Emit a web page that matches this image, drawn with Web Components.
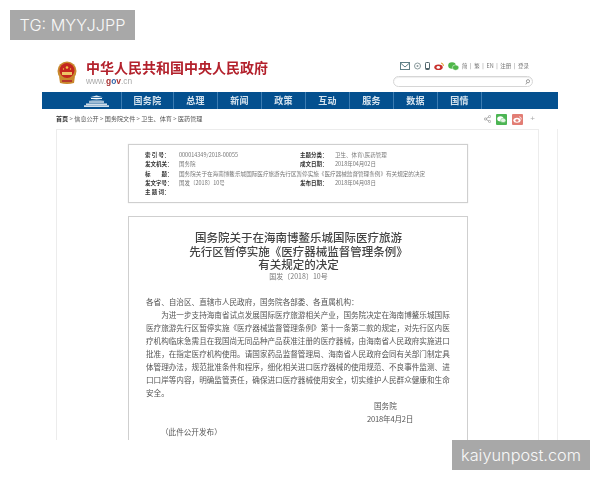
<!DOCTYPE html>
<html lang="zh">
<head>
<meta charset="utf-8">
<title>国务院关于在海南博鳌乐城国际医疗旅游先行区暂停实施《医疗器械监督管理条例》有关规定的决定</title>
<style>
    html, body { margin: 0; background: #fff; }
    body { width: 600px; height: 480px; overflow: hidden; position: relative; font-family: "Liberation Sans", "Noto Sans CJK SC", sans-serif; }
</style>
</head>
<body>
<gov-page>
    <gov-header></gov-header>
    <gov-nav></gov-nav>
    <crumb-bar></crumb-bar>
    <doc-card>
        <doc-meta></doc-meta>
        <doc-body></doc-body>
    </doc-card>
</gov-page>
<water-mark class="top" style="left:10px;top:10px;width:125px">TG: MYYJJPP</water-mark>
<water-mark style="left:452px;top:440px;width:138px">kaiyunpost.com</water-mark>

<script>
class GovPage extends HTMLElement {
    constructor() {
        super();
        this.attachShadow({ mode: 'open' });
        this.shadowRoot.innerHTML = `
            <style>
                :host { display: block; margin: 40px 0 0 42px; width: 516px; height: 400px; overflow: hidden; }
            </style>
            <slot></slot>
        `;
    }
}

class GovHeader extends HTMLElement {
    constructor() {
        super();
        this.attachShadow({ mode: 'open' });
        this.shadowRoot.innerHTML = `
            <style>
                :host { display: flex; justify-content: space-between; box-sizing: border-box; height: 52px; padding: 21px 25px 0 15px; filter: blur(.4px); }
                .brand { display: flex; gap: 9px; }
                .names { display: flex; flex-direction: column; }
                h1 { margin: 0; font: 700 14px/15px "Liberation Sans", "Noto Sans CJK SC", sans-serif; color: #b3212c; white-space: nowrap; }
                .url { margin-top: 1px; font: 8.4px/9px "Liberation Sans", sans-serif; color: #aaa; }
                .url b { color: #a33; font-weight: 700; }
                .url b i { font-style: normal; color: #36a; }
                .tools { width: 140px; display: flex; flex-direction: column; gap: 5px; }
                .icons { display: flex; align-items: center; height: 10px; padding-left: 7px; gap: 4px; }
                .langs { margin-left: -1px; display: flex; gap: 2.6px; font: 5.5px/10px "Noto Sans CJK SC", sans-serif; color: #777; white-space: nowrap; }
                .search { height: 9px; border: 1px solid #d6d6d6; border-radius: 6px; display: flex; justify-content: flex-end; align-items: center; padding-right: 2px; box-shadow: inset 0 1px 1px #eee; }
                svg { display: block; flex: none; }
            </style>
            <div class="brand">
                <svg width="20" height="24" viewBox="0 0 20 24">
                    <circle cx="10" cy="10" r="9.5" fill="#c98a2e"/>
                    <circle cx="10" cy="9.5" r="7.5" fill="#c4261f"/>
                    <circle cx="10" cy="6.5" r="1.3" fill="#f2c84b"/>
                    <circle cx="6.5" cy="8" r=".7" fill="#f2c84b"/>
                    <circle cx="13.5" cy="8" r=".7" fill="#f2c84b"/>
                    <rect x="5" y="11" width="10" height="3" fill="#eec466"/>
                    <path d="M2 15 Q10 21 18 15 L17 22 Q10 24 3 22Z" fill="#c9872c"/>
                    <rect x="5" y="19" width="10" height="2" fill="#b5382a"/>
                </svg>
                <div class="names">
                    <h1>中华人民共和国中央人民政府</h1>
                    <div class="url">www.<b>g<i>o</i>v</b>.cn</div>
                </div>
            </div>
            <div class="tools">
                <div class="icons">
                    <svg width="10" height="8" viewBox="0 0 10 8"><rect x=".5" y=".5" width="9" height="7" fill="none" stroke="#5f7f86"/><path d="M.5 1 5 5 9.5 1" fill="none" stroke="#5f7f86"/></svg>
                    <svg width="7" height="8" viewBox="0 0 7 8"><circle cx="3.5" cy="4" r="3" fill="none" stroke="#8a9a9c"/><circle cx="3.5" cy="4" r="1" fill="#8a9a9c"/></svg>
                    <svg width="5" height="8" viewBox="0 0 5 8"><rect x=".5" y=".5" width="4" height="7" rx=".8" fill="none" stroke="#50646a"/><rect x="1" y="6" width="3" height="1.5" fill="#50646a"/></svg>
                    <svg width="10" height="8" viewBox="0 0 10 8"><ellipse cx="4.5" cy="5.2" rx="4.2" ry="2.8" fill="#c9302c"/><ellipse cx="4.3" cy="5.4" rx="1.8" ry="1.3" fill="#fff"/><path d="M7 1Q9.6 1.2 9.4 4" fill="none" stroke="#e09a2a"/></svg>
                    <svg width="11" height="9" viewBox="0 0 11 9"><ellipse cx="4" cy="3.5" rx="3.8" ry="3.2" fill="#4fb64a"/><ellipse cx="7.6" cy="5.6" rx="3.2" ry="2.7" fill="#4fb64a" stroke="#fff" stroke-width=".5"/></svg>
                    <div class="langs"><span>简</span><span>|</span><span>繁</span><span>|</span><span>EN</span><span>|</span><span>注册</span><span>|</span><span>登录</span></div>
                </div>
                <div class="search">
                    <svg width="5" height="6" viewBox="0 0 5 6"><circle cx="3" cy="2.2" r="1.6" fill="none" stroke="#888" stroke-width=".8"/><path d="M2 3.6 .8 5.4" stroke="#888" stroke-width=".8"/></svg>
                </div>
            </div>
        `;
    }
}

class GovNav extends HTMLElement {
    constructor() {
        super();
        this.attachShadow({ mode: 'open' });
        const items = ['国务院', '总理', '新闻', '政策', '互动', '服务', '数据', '国情'];
        this.shadowRoot.innerHTML = `
            <style>
                :host { display: flex; height: 17px; background: #04508f; filter: blur(.4px); }
                .home { width: 80px; box-sizing: border-box; display: flex; justify-content: flex-end; align-items: center; padding-right: 12px; border-right: 1px solid #3c7cb2; }
                a { width: 44px; box-sizing: border-box; border-right: 1px solid #3c7cb2; text-align: center; font: 700 9px/17px "Noto Sans CJK SC", sans-serif; letter-spacing: .3px; color: #d5e3ee; }
                a:first-of-type { width: 52px; }
            </style>
            <div class="home">
                <svg width="25" height="12" viewBox="0 0 25 12">
                    <path d="M6 2.2 12.5 .5 19 2.2Z" fill="#e6eef5"/>
                    <rect x="7" y="3" width="11" height="1" fill="#fff"/>
                    <path d="M4 5.6 12.5 4.4 21 5.6Z" fill="#cfdeea"/>
                    <rect x="5" y="6" width="15" height="2" fill="#9fbcd4"/>
                    <rect x="2" y="8.5" width="21" height="1.4" fill="#e6eef5"/>
                    <rect x="0" y="10.4" width="25" height="1.4" fill="#fff"/>
                </svg>
            </div>
            ${items.map(i => `<a>${i}</a>`).join('')}
        `;
    }
}

class CrumbBar extends HTMLElement {
    constructor() {
        super();
        this.attachShadow({ mode: 'open' });
        this.shadowRoot.innerHTML = `
            <style>
                :host { display: flex; align-items: center; justify-content: space-between; box-sizing: border-box; height: 20px; padding: 0 23px 0 14px; filter: blur(.35px); font: 6.1px/8px "Noto Sans CJK SC", sans-serif; color: #555; }
                b { color: #333; }
                .share { display: flex; align-items: center; gap: 5px; }
                svg { display: block; }
                .sq { width: 11px; height: 11px; border-radius: 1px; display: flex; align-items: center; justify-content: center; }
                .plus { color: #aaa; font: 8px/8px "Liberation Sans", sans-serif; margin-left: 2px; }
            </style>
            <div><b>首页</b> &gt; 信息公开 &gt; 国务院文件 &gt; 卫生、体育 &gt; 医药管理</div>
            <div class="share">
                <svg width="7" height="8" viewBox="0 0 7 8"><path d="M5.5 1.5 1.5 4 5.5 6.5" fill="none" stroke="#888" stroke-width=".7"/><circle cx="5.6" cy="1.5" r="1.1" fill="#fff" stroke="#888" stroke-width=".6"/><circle cx="1.4" cy="4" r="1.1" fill="#fff" stroke="#888" stroke-width=".6"/><circle cx="5.6" cy="6.5" r="1.1" fill="#fff" stroke="#888" stroke-width=".6"/></svg>
                <div class="sq" style="background:#4cb553"><svg width="9" height="7" viewBox="0 0 9 7"><ellipse cx="3.4" cy="2.8" rx="3.2" ry="2.6" fill="#fff"/><ellipse cx="6.2" cy="4.4" rx="2.6" ry="2.2" fill="#e4f5e4" stroke="#4cb553" stroke-width=".4"/></svg></div>
                <div class="sq" style="background:#e27d74"><svg width="9" height="7" viewBox="0 0 9 7"><ellipse cx="4" cy="4.3" rx="3.6" ry="2.5" fill="#fff"/><ellipse cx="4" cy="4.5" rx="1.6" ry="1.2" fill="#e27d74"/><path d="M6.2 .7Q8.6 1 8.3 3.4" fill="none" stroke="#fff" stroke-width=".8"/></svg></div>
                <div class="plus">+</div>
            </div>
        `;
    }
}

class DocCard extends HTMLElement {
    constructor() {
        super();
        this.attachShadow({ mode: 'open' });
        this.shadowRoot.innerHTML = `
            <style>
                :host { display: block; height: 311px; overflow: hidden; border-right: 1px solid #eee; }
                .inner { box-sizing: border-box; margin-left: 14px; width: 483px; height: 311px; border: 1px solid #ececec; border-bottom: 0; padding: 14px 0 0 71px; }
            </style>
            <div class="inner"><slot></slot></div>
        `;
    }
}

class DocMeta extends HTMLElement {
    constructor() {
        super();
        this.attachShadow({ mode: 'open' });
        this.shadowRoot.innerHTML = `
            <style>
                :host { display: block; box-sizing: border-box; width: 340px; height: 59px; border: 1px solid #cfcfcf; box-shadow: 0 0 1px #ddd; padding: 6px 0 0 16px; filter: blur(.4px); }
                .rows { display: grid; grid-template-columns: 34px 121px 35px 1fr; grid-auto-rows: 9.3px; font: 5.5px/9.3px "Noto Sans CJK SC", sans-serif; color: #777; white-space: nowrap; }
                b { color: #333; }
                .wide { grid-column: 2 / 5; font-size: 5.6px; }
            </style>
            <div class="rows">
                <b>索 引 号&#xFF1A;</b><span>000014349/2018-00055</span><b>主题分类&#xFF1A;</b><span>卫生、体育\\医药管理</span>
                <b>发文机关&#xFF1A;</b><span>国务院</span><b>成文日期&#xFF1A;</b><span>2018年04月02日</span>
                <b>标　　题&#xFF1A;</b><span class="wide">国务院关于在海南博鳌乐城国际医疗旅游先行区暂停实施《医疗器械监督管理条例》有关规定的决定</span>
                <b>发文字号&#xFF1A;</b><span>国发〔2018〕10号</span><b>发布日期&#xFF1A;</b><span>2018年04月08日</span>
                <b>主 题 词&#xFF1A;</b><span></span>
            </div>
        `;
    }
}

class DocBody extends HTMLElement {
    constructor() {
        super();
        this.attachShadow({ mode: 'open' });
        this.shadowRoot.innerHTML = `
            <style>
                :host { display: block; box-sizing: border-box; width: 340px; height: 240px; margin-top: 13px; border: 1px solid #cfcfcf; border-bottom: 0; padding: 15px 16px 0 17px; filter: blur(.4px); font-family: "Noto Sans CJK SC", sans-serif; color: #555; }
                h2 { margin: 0; font: 500 11.5px/13.5px "Liberation Serif", "Noto Sans CJK SC", serif; color: #444; text-align: center; }
                .no { margin-top: -2px; font-size: 7px; line-height: 11px; text-align: center; color: #777; }
                p { margin: 0; font-size: 7.6px; line-height: 13px; width: 305px; }
                .to { margin-top: 13px; }
                .main { text-indent: 2em; }
                .sign { padding-left: 228px; }
                .date { padding-left: 221px; letter-spacing: -.2px; }
                .pub { padding-left: 15px; }
            </style>
            <h2>国务院关于在海南博鳌乐城国际医疗旅游<br>先行区暂停实施《医疗器械监督管理条例》<br>有关规定的决定</h2>
            <div class="no">国发〔2018〕10号</div>
            <p class="to">各省、自治区、直辖市人民政府&#xFF0C;国务院各部委、各直属机构&#xFF1A;</p>
            <p class="main">为进一步支持海南省试点发展国际医疗旅游相关产业&#xFF0C;国务院决定在海南博鳌乐城国际医疗旅游先行区暂停实施《医疗器械监督管理条例》第十一条第二款的规定&#xFF0C;对先行区内医疗机构临床急需且在我国尚无同品种产品获准注册的医疗器械&#xFF0C;由海南省人民政府实施进口批准&#xFF0C;在指定医疗机构使用。请国家药品监督管理局、海南省人民政府会同有关部门制定具体管理办法&#xFF0C;规范批准条件和程序&#xFF0C;细化相关进口医疗器械的使用规范、不良事件监测、进口口岸等内容&#xFF0C;明确监管责任&#xFF0C;确保进口医疗器械使用安全&#xFF0C;切实维护人民群众健康和生命安全。</p>
            <p class="sign">国务院</p>
            <p class="date">2018年4月2日</p>
            <p class="pub">&#xFF08;此件公开发布&#xFF09;</p>
        `;
    }
}

class WaterMark extends HTMLElement {
    constructor() {
        super();
        this.attachShadow({ mode: 'open' });
        this.shadowRoot.innerHTML = `
            <style>
                :host { display: block; position: absolute; height: 30px; background: #a8a8a8; color: #f8f8f8; font: 300 16.3px/30px "Inter", "Liberation Sans", sans-serif; text-align: center; white-space: nowrap; }
            </style>
            <slot></slot>
        `;
    }
}

customElements.define('gov-page', GovPage);
customElements.define('gov-header', GovHeader);
customElements.define('gov-nav', GovNav);
customElements.define('crumb-bar', CrumbBar);
customElements.define('doc-card', DocCard);
customElements.define('doc-meta', DocMeta);
customElements.define('doc-body', DocBody);
customElements.define('water-mark', WaterMark);
</script>
</body>
</html>
